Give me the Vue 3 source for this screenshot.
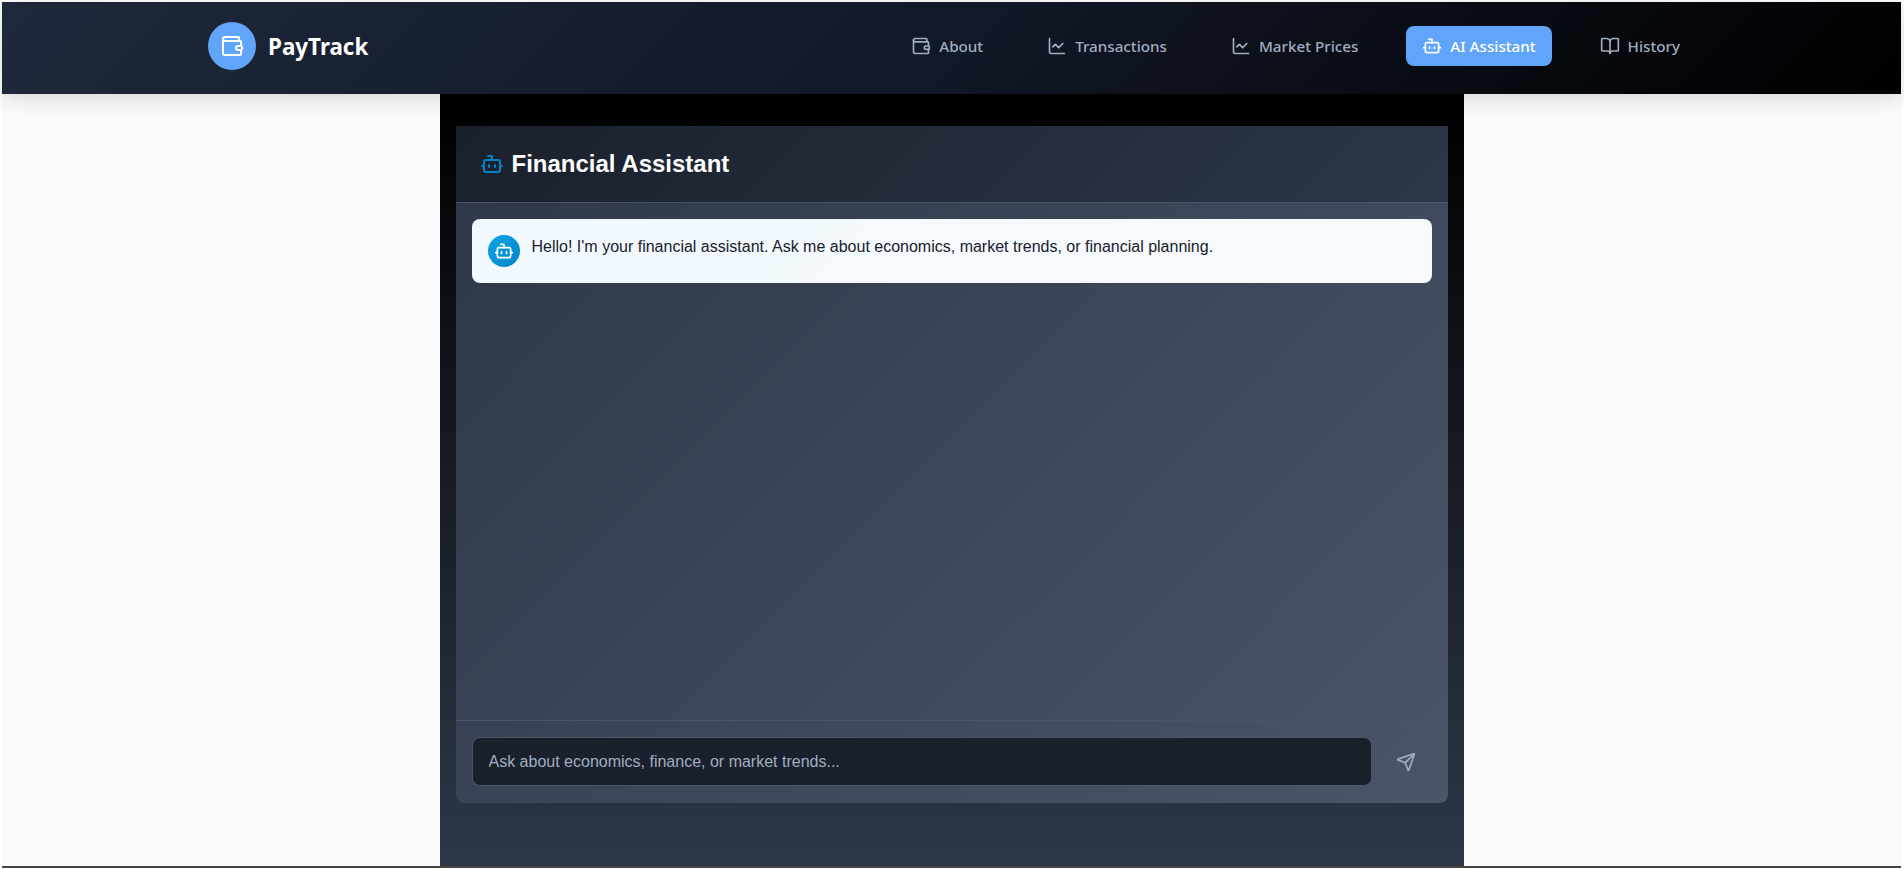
<script setup>
const nav = [
  { label: 'About', icon: 'wallet' },
  { label: 'Transactions', icon: 'chart' },
  { label: 'Market Prices', icon: 'chart' },
  { label: 'AI Assistant', icon: 'bot', active: true },
  { label: 'History', icon: 'book' },
]
</script>

<template>
  <div class="screen">
    <header class="topbar">
      <div class="brand">
        <span class="brand-mark">
          <svg class="ic-24" viewBox="0 0 24 24"><path d="M19 7V4a1 1 0 0 0-1-1H5a2 2 0 0 0 0 4h15a1 1 0 0 1 1 1v4h-3a2 2 0 0 0 0 4h3a1 1 0 0 0 1-1v-2a1 1 0 0 0-1-1"/><path d="M3 5v14a2 2 0 0 0 2 2h15a1 1 0 0 0 1-1v-4"/></svg>
        </span>
        <span class="brand-name">PayTrack</span>
      </div>
      <nav class="nav">
        <a v-for="n in nav" :key="n.label" class="nav-item" :class="{ active: n.active }">
          <svg class="ic-20" viewBox="0 0 24 24">
            <template v-if="n.icon === 'wallet'">
              <path d="M19 7V4a1 1 0 0 0-1-1H5a2 2 0 0 0 0 4h15a1 1 0 0 1 1 1v4h-3a2 2 0 0 0 0 4h3a1 1 0 0 0 1-1v-2a1 1 0 0 0-1-1"/><path d="M3 5v14a2 2 0 0 0 2 2h15a1 1 0 0 0 1-1v-4"/>
            </template>
            <template v-else-if="n.icon === 'chart'">
              <path d="M3 3v16a2 2 0 0 0 2 2h16"/><path d="m19 9-5 5-4-4-3 3"/>
            </template>
            <template v-else-if="n.icon === 'bot'">
              <path d="M12 8V4H8"/><rect width="16" height="12" x="4" y="8" rx="2"/><path d="M2 14h2"/><path d="M20 14h2"/><path d="M15 13v2"/><path d="M9 13v2"/>
            </template>
            <template v-else>
              <path d="M12 7v14"/><path d="M3 18a1 1 0 0 1-1-1V4a1 1 0 0 1 1-1h5a4 4 0 0 1 4 4 4 4 0 0 1 4-4h5a1 1 0 0 1 1 1v13a1 1 0 0 1-1 1h-6a3 3 0 0 0-3 3 3 3 0 0 0-3-3z"/>
            </template>
          </svg>
          <span>{{ n.label }}</span>
        </a>
      </nav>
    </header>
    <main class="page">
      <section class="column">
        <div class="chat">
          <div class="chat-head">
            <svg class="ic-24 head-icon" viewBox="0 0 24 24"><path d="M12 8V4H8"/><rect width="16" height="12" x="4" y="8" rx="2"/><path d="M2 14h2"/><path d="M20 14h2"/><path d="M15 13v2"/><path d="M9 13v2"/></svg>
            <h1>Financial Assistant</h1>
          </div>
          <div class="messages">
            <div class="bubble">
              <span class="avatar">
                <svg class="ic-20" viewBox="0 0 24 24"><path d="M12 8V4H8"/><rect width="16" height="12" x="4" y="8" rx="2"/><path d="M2 14h2"/><path d="M20 14h2"/><path d="M15 13v2"/><path d="M9 13v2"/></svg>
              </span>
              <p>Hello! I'm your financial assistant. Ask me about economics, market trends, or financial planning.</p>
            </div>
          </div>
          <div class="composer">
            <input class="field" type="text" placeholder="Ask about economics, finance, or market trends..." />
            <button class="send" type="button" aria-label="Send">
              <svg class="ic-20" viewBox="0 0 24 24"><path d="M14.536 21.686a.5.5 0 0 0 .937-.024l6.5-19a.496.496 0 0 0-.635-.635l-19 6.5a.5.5 0 0 0-.024.937l7.93 3.18a2 2 0 0 1 1.112 1.11z"/><path d="m21.854 2.147-10.94 10.939"/></svg>
            </button>
          </div>
        </div>
      </section>
    </main>
  </div>
</template>

<style>
html, body { margin: 0; background: #fff; overflow: hidden; }
</style>

<style scoped>
svg { fill: none; stroke: currentColor; stroke-width: 2; stroke-linecap: round; stroke-linejoin: round; flex: none; display: block; }
.ic-20 { width: 20px; height: 20px; }
.ic-24 { width: 24px; height: 24px; }
.screen {
  box-sizing: border-box;
  width: 1904px; height: 869px;
  padding: 2px 3px 1px 2px;
  display: flex; flex-direction: column;
  font-family: "Liberation Sans", Arial, sans-serif;
}
.topbar {
  height: 92px; flex: none; box-sizing: border-box;
  padding: 0 205px 4px 206px;
  display: flex; align-items: center; justify-content: space-between;
  background: linear-gradient(135deg, #1e293b 0%, #111827 50%, #000 100%);
  box-shadow: 0 4px 20px rgba(0,0,0,.15);
  position: relative; z-index: 2;
}
.brand { display: flex; align-items: center; gap: 12px; }
.brand-mark {
  width: 48px; height: 48px; border-radius: 50%;
  background: #60a5fa; color: #fff;
  display: flex; align-items: center; justify-content: center;
}
.brand-name { font-family: "Noto Sans", sans-serif; font-weight: 700; font-size: 22.4px; color: #fff; }
.nav { display: flex; align-items: center; gap: 32px; }
.nav-item {
  display: flex; align-items: center; gap: 8px;
  height: 40px; box-sizing: border-box; padding: 0 16px; border-radius: 8px;
  font-family: "Noto Sans", sans-serif; font-size: 15.2px; font-weight: 500;
  color: #a0aec0;
}
.nav-item.active { background: #60a5fa; color: #fff; }
.page { flex: 1; min-height: 0; display: flex; justify-content: center; background: #f8fafc; border-bottom: 2px solid #4a4540; }
.column {
  width: 1024px; box-sizing: border-box; padding: 32px 16px 63px;
  background: linear-gradient(180deg, #000 0%, #2d3748 100%);
  display: flex;
}
.chat {
  flex: 1; display: flex; flex-direction: column;
  border-radius: 0 0 8px 8px; overflow: hidden;
  background: linear-gradient(135deg, #2d3748, #4a5568);
}
.chat-head {
  height: 77px; box-sizing: border-box; flex: none; display: flex; align-items: center; gap: 8px;
  padding: 0 24px;
  background: linear-gradient(135deg, #1a202c, #2d3748);
  border-bottom: 1px solid #4a5568;
}
.head-icon { color: #0284c7; }
h1 { margin: 0; font-size: 24px; font-weight: 700; color: #fff; }
.messages { flex: 1; padding: 16px; }
.bubble {
  display: flex; gap: 12px; padding: 16px;
  background: linear-gradient(135deg, #f0f9ff, #f8fafc); border-radius: 8px; height: 64px; box-sizing: border-box;
}
.avatar {
  width: 32px; height: 32px; border-radius: 50%;
  background: linear-gradient(135deg, #0ea5e9, #0284c7); color: #fff;
  display: flex; align-items: center; justify-content: center; flex: none;
}
p { margin: 0; font-size: 16px; line-height: 24px; color: #1a202c; }
.composer {
  display: flex; align-items: center; gap: 8px; padding: 16px 16px 17px;
  border-top: 1px solid #4a5568;
}
.field {
  flex: 1; height: 49px; box-sizing: border-box; padding: 0 16px;
  background: #1a202c; border: 1px solid #4a5568; border-radius: 8px;
  font-family: inherit; font-size: 16px; color: #fff; outline: none;
}
.field::placeholder { color: #a0aec0; opacity: 1; }
.send {
  width: 52px; height: 49px; background: transparent; border: 0;
  color: #a0aec0; display: flex; align-items: center; justify-content: center; padding: 0;
}
</style>
